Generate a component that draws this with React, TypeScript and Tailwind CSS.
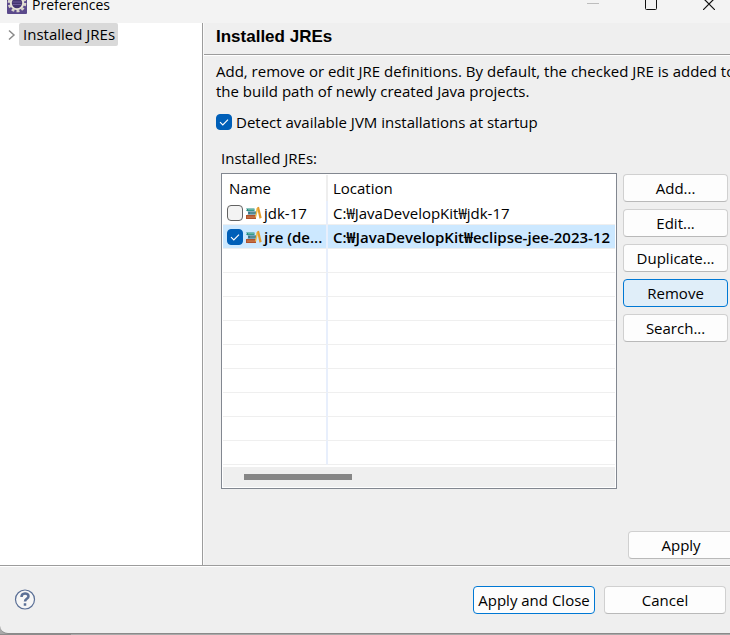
import type { ReactNode } from "react";

function Check({ id, checked, label }: { id: string; checked: boolean; label?: string }) {
  return (
    <span className="grid h-4 w-4 shrink-0">
      <input
        id={id}
        type="checkbox"
        aria-label={label}
        defaultChecked={checked}
        className="peer col-start-1 row-start-1 h-4 w-4 appearance-none rounded border border-[#626262] bg-[#f3f3f3] checked:border-[#005fb8] checked:bg-[#005fb8]"
      />
      <svg
        viewBox="0 0 16 16"
        className="pointer-events-none invisible col-start-1 row-start-1 h-4 w-4 peer-checked:visible"
        fill="none"
        stroke="#fff"
        strokeWidth="1.1"
      >
        <path d="M4 8.2 6.8 11 12 5.6" />
      </svg>
    </span>
  );
}

function LibraryIcon() {
  return (
    <svg viewBox="0 0 16 16" className="h-4 w-4 shrink-0">
      <path d="M0 3.500h8.500V6H0l1-1.200z" fill="#1f8a80" />
      <path d="M2 4.400h6v.8H2z" fill="#8fd0bd" />
      <path d="M1.500 6.500h8.500v3H1.500l1-1.500z" fill="#1d5f78" />
      <path d="M3.500 7.600h6v.8h-6z" fill="#a9cfc4" />
      <path d="M0 10h10v4H0z" fill="#b0522c" />
      <path d="M1 11.600h8v.9H1z" fill="#d98f5c" />
      <path d="m10.500 3 1.800.8-2.200 8.700H9z" fill="#f5c04a" />
      <path d="m11 2.500 2-.7 2.700 11-2.200.9z" fill="#e39a2c" />
    </svg>
  );
}

function GearIcon() {
  return (
    <svg viewBox="0 0 20 20" className="h-5 w-5 shrink-0">
      <rect width="20" height="20" rx="1" fill="#5b4a8c" />
      <circle cx="10" cy="9" r="8" fill="none" stroke="#d9d5cc" strokeWidth="2.600" strokeDasharray="2.900 2.127" />
      <circle cx="10" cy="9" r="6.200" fill="#43336f" stroke="#e6e2d6" strokeWidth="2" />
      <path d="M5.500 8h9M5.500 10.500h9" stroke="#6f5c9c" />
    </svg>
  );
}

function Button({ children, kind = "plain", width }: { children: ReactNode; kind?: "plain" | "hot" | "default"; width: string }) {
  const look = {
    plain: "border-[#d0d0d0] border-b-[#b9b9b9] bg-[#fdfdfd]",
    hot: "border-[#0078d4] bg-[#e0eef9]",
    default: "border-[#0078d4] bg-[#fdfdfd]",
  }[kind];
  return (
    <button type="button" className={`h-7 shrink-0 whitespace-nowrap rounded border ${width} ${look}`}>
      {children}
    </button>
  );
}

const rows = [
  { id: "jdk", name: "jdk-17", location: "C:₩JavaDevelopKit₩jdk-17", checked: false },
  { id: "jre", name: "jre (de...", location: "C:₩JavaDevelopKit₩eclipse-jee-2023-12", checked: true },
];
const emptyRows = [1, 2, 3, 4, 5, 6, 7, 8, 9];

export default function App() {
  return (
    <div className="flex min-h-screen flex-col overflow-hidden bg-[#a9a9a9] font-['Open_Sans','Noto_Sans_CJK_KR',sans-serif] text-[15px] leading-5 text-black">
      <div className="flex grow flex-col overflow-hidden rounded-bl-lg border-b border-[#8a8a8a] bg-[#efefef]">
        <header className="h-[23px] overflow-hidden bg-[#f3f3f3]">
          <div className="-mt-1.5 flex h-5 items-center pl-[7px] pr-[15px]">
            <GearIcon />
            <span className="ml-[5px] pt-0.5 text-[14px]">Preferences</span>
            <div className="ml-auto flex items-center gap-[46px]">
              <button type="button" aria-label="Minimize" disabled className="h-3 w-3">
                <svg viewBox="0 0 12 12" className="h-3 w-3"><path d="M0 5.500h12" stroke="#bdbdbd" /></svg>
              </button>
              <button type="button" aria-label="Maximize" className="h-3 w-3">
                <svg viewBox="0 0 12 12" className="h-3 w-3"><rect x=".5" y=".5" width="11" height="11" rx="1" fill="none" stroke="#111" /></svg>
              </button>
              <button type="button" aria-label="Close" className="h-3 w-3">
                <svg viewBox="0 0 12 12" className="h-3 w-3"><path d="m0 0 12 12M12 0 0 12" stroke="#111" strokeWidth="1.200" /></svg>
              </button>
            </div>
          </div>
        </header>

        <div className="flex border-b border-[#9c9c9c]">
          <nav className="w-[203px] shrink-0 border-r border-[#9c9c9c] bg-white">
            <div className="flex items-center pl-1.5">
              <svg viewBox="0 0 10 12" className="mr-[3px] h-3 w-2.5" fill="none" stroke="#8a8a8a" strokeWidth="1.500">
                <path d="m3 1.500 5 4.500-5 4.500" />
              </svg>
              <a href="#jres" className="rounded-xs bg-[#d9d9d9] px-[3px] pb-0.5 pl-1 pt-px">Installed JREs</a>
            </div>
          </nav>

          <main className="min-w-0 grow overflow-hidden border-l border-[#fafafa]">
            <h1 className="h-8 border-b border-[#9c9c9c] pl-3 pt-1 font-['Liberation_Sans',sans-serif] text-[17px] font-bold leading-5">
              Installed JREs
            </h1>
            <div className="border-t border-white pl-3 pt-[5px]">
              <p className="whitespace-nowrap">
                Add, remove or edit JRE definitions. By default, the checked JRE is added to<br />
                the build path of newly created Java projects.
              </p>
              <label htmlFor="detect" className="mt-[11px] flex items-center gap-1">
                <Check id="detect" checked />
                Detect available JVM installations at startup
              </label>
              <div className="mt-4 pl-[5px]">
                <p>Installed JREs:</p>
                <div className="mt-[5px] flex items-start gap-1.5 pr-0.5">
                  <div className="min-w-0 grow border border-[#828790] bg-white p-px">
                    <table className="w-full table-fixed border-separate border-spacing-0">
                      <thead>
                        <tr className="h-[26px] text-left">
                          <th className="w-[105px] border-r-2 border-[#eeeeee] p-0 pl-1.5 font-normal">Name</th>
                          <th className="p-0 pl-[5px] font-normal">Location</th>
                        </tr>
                      </thead>
                      <tbody>
                        {rows.map((row) => (
                          <tr key={row.id} className={row.checked ? "h-6 bg-[#cce8ff] font-semibold" : "h-6"}>
                            <td className="border-b border-r-2 border-b-[#efefef] border-r-[#e8effc] p-0 pl-1">
                              <div className="flex items-center whitespace-nowrap">
                                <Check id={row.id} checked={row.checked} label={row.name} />
                                <span className="ml-[3px] mr-0.5"><LibraryIcon /></span>
                                <span>{row.name}</span>
                              </div>
                            </td>
                            <td className="overflow-hidden whitespace-nowrap border-b border-[#efefef] p-0 pl-[5px]">{row.location}</td>
                          </tr>
                        ))}
                        {emptyRows.map((n) => (
                          <tr key={n} className="h-6">
                            <td className="border-b border-r-2 border-b-[#efefef] border-r-[#e8effc] p-0" />
                            <td className="border-b border-[#efefef] p-0" />
                          </tr>
                        ))}
                      </tbody>
                    </table>
                    <div className="mt-0.5 flex h-5 items-center bg-[#efefef] pl-[21px]">
                      <div className="h-1.5 w-[108px] bg-[#868686]" />
                    </div>
                  </div>
                  <div className="mt-px flex flex-col gap-[7px]">
                    <Button width="w-[105px]">Add...</Button>
                    <Button width="w-[105px]">Edit...</Button>
                    <Button width="w-[105px]">Duplicate...</Button>
                    <Button width="w-[105px]" kind="hot">Remove</Button>
                    <Button width="w-[105px]">Search...</Button>
                  </div>
                </div>
              </div>
              <div className="-mr-1 mb-1.5 mt-[42px] flex justify-end">
                <Button width="w-[106px]">Apply</Button>
              </div>
            </div>
          </main>
        </div>

        <footer className="flex grow items-center gap-[9px] border-t border-white pl-3.5 pr-1">
          <button type="button" aria-label="Help" className="mr-auto h-[22px] w-[22px]">
            <svg viewBox="0 0 22 22" className="h-[22px] w-[22px]" fill="none" stroke="#5a6f96">
              <circle cx="11" cy="10.500" r="9.500" strokeWidth="1.200" fill="#f6f6f6" />
              <path d="M7.500 8c0-4.500 7-4.500 7-.8 0 2.700-3.500 2.500-3.500 5.300" strokeWidth="2.500" />
              <path d="M11 14.300v2.400" strokeWidth="2.500" />
            </svg>
          </button>
          <Button width="w-[122px]" kind="default">Apply and Close</Button>
          <Button width="w-[122px]">Cancel</Button>
        </footer>
      </div>
      <div className="flex h-px">
        <div className="w-[71px] bg-[#8c8c8c]" />
      </div>
    </div>
  );
}
